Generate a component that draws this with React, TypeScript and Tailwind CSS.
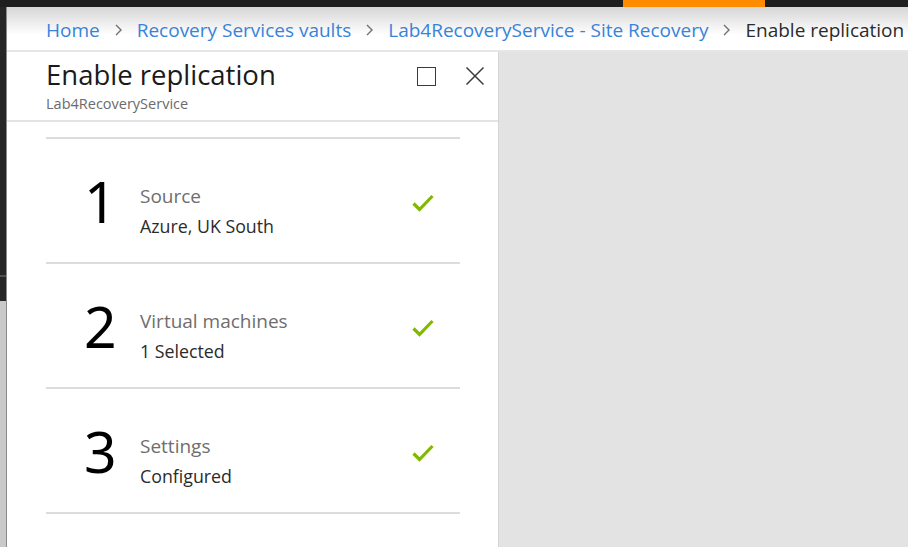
import { useState } from 'react'

const steps = [
  { n: '1', title: 'Source', value: 'Azure, UK South' },
  { n: '2', title: 'Virtual machines', value: '1 Selected' },
  { n: '3', title: 'Settings', value: 'Configured' },
]

const crumbs = ['Home', 'Recovery Services vaults', 'Lab4RecoveryService - Site Recovery']

function Chevron() {
  return (
    <svg width="9" height="14" viewBox="0 0 9 14" className="mx-[14px] shrink-0">
      <path d="M2 2l5 5-5 5" fill="none" stroke="#707070" strokeWidth="1.4" />
    </svg>
  )
}

function Check() {
  return (
    <svg width="24" height="20" viewBox="0 0 24 20">
      <path d="M2.5 10.5l6 6L21.5 3" fill="none" stroke="#7fba00" strokeWidth="3.2" />
    </svg>
  )
}

export default function App() {
  const [maximized, setMaximized] = useState(false)

  return (
    <div
      className="w-[908px] h-[547px] overflow-hidden flex flex-col bg-[#e3e3e3]"
      style={{ fontFamily: '"Open Sans", "Noto Sans", sans-serif' }}
    >
      {/* Top bar */}
      <div className="h-[7px] bg-[#1e1e1e] flex shrink-0">
        <div className="ml-[623px] w-[142px] bg-[#ff8c00]" />
      </div>

      <div className="flex flex-1">
        {/* Left rail */}
        <div className="w-[7px] flex flex-col border-r border-[#8a8a8a] shrink-0">
          <div className="h-[268px] bg-[#262626]" />
          <div className="h-[2px] bg-[#505050]" />
          <div className="h-[24px] bg-[#262626]" />
          <div className="flex-1 bg-[#c9c9c9]" />
        </div>

        <div className="flex-1 flex flex-col">
          {/* Breadcrumb */}
          <div className="h-[45px] flex items-center pl-[39px] pt-[3px] bg-[linear-gradient(to_bottom,#d6d6d6,#ffffff_65%)] border-b-2 border-[#e6e6e6] text-[19px] whitespace-nowrap">
            {crumbs.map((c) => (
              <span key={c} className="flex items-center">
                <a href="#" className="text-[#3783d9]">{c}</a>
                <Chevron />
              </span>
            ))}
            <span className="text-[#2b2b2b]">Enable replication</span>
          </div>

          <div className="flex flex-1">
            {/* Blade */}
            <div className="w-[492px] bg-white border-r border-[#d4d4d4] flex flex-col">
              <div className="h-[70px] border-b-2 border-[#e3e3e3] flex pl-[39px] pr-[13px]">
                <div className="flex-1 pt-[7px]">
                  <div className="text-[27.5px] leading-[32px] text-[#1a1a1a]">Enable replication</div>
                  <div className="text-[14.5px] leading-[18px] text-[#6b6b6b] mt-[4px]">Lab4RecoveryService</div>
                </div>
                <div className="flex items-start pt-[15px] gap-[29px]">
                  <button onClick={() => setMaximized(!maximized)} className="w-[19px] h-[19px] border-[1.5px] border-[#3a3a3a]" />
                  <svg width="20" height="20" viewBox="0 0 20 20" className="-mt-[1px]">
                    <path d="M1.5 1.5l17 17M18.5 1.5l-17 17" stroke="#3a3a3a" strokeWidth="1.5" />
                  </svg>
                </div>
              </div>

              <div className="pl-[39px] pr-[38px] pt-[15px]">
                {steps.map((s) => (
                  <div key={s.n} className="h-[125px] border-t-2 border-[#dcdcdc] flex items-center">
                    <div className="w-[94px] pl-[38px] text-[57px] leading-none text-black mt-[2px]" style={{ fontFamily: '"Noto Sans", sans-serif', fontWeight: 400 }}>
                      {s.n}
                    </div>
                    <div className="flex-1 mt-[20px]">
                      <div className="text-[19px] leading-[26px] text-[#6e6e6e]">{s.title}</div>
                      <div className="text-[17.8px] leading-[26px] text-[#2b2b2b] mt-[4px]">{s.value}</div>
                    </div>
                    <div className="pr-[25px] mt-[4px]">
                      <Check />
                    </div>
                  </div>
                ))}
                <div className="border-t-2 border-[#dcdcdc]" />
              </div>
            </div>
            <div className="flex-1" />
          </div>
        </div>
      </div>
    </div>
  )
}
